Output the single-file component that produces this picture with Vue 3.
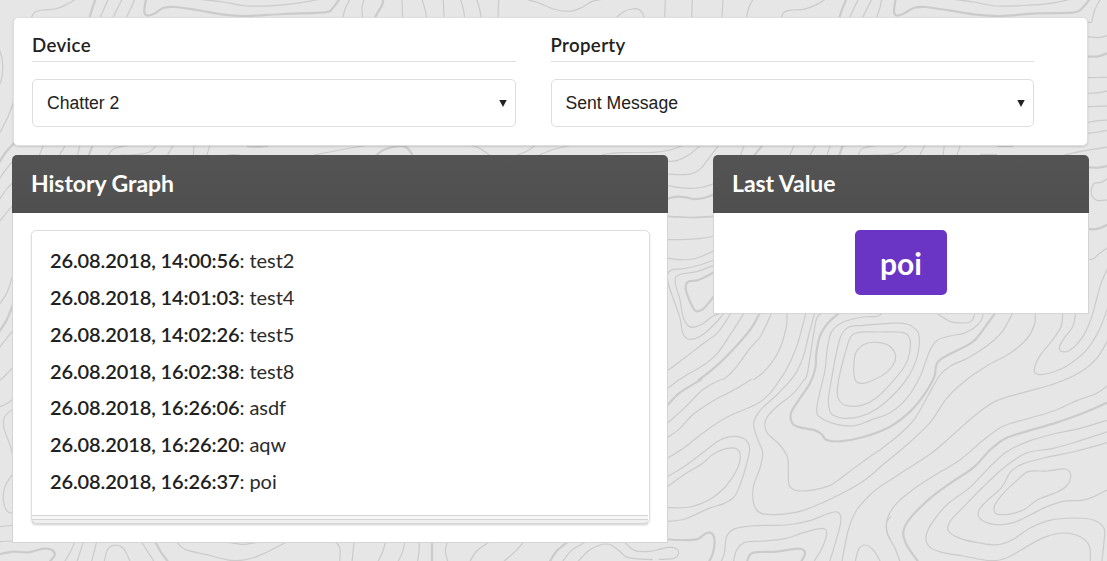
<script setup>
const fields = [
  { label: 'Device', value: 'Chatter 2' },
  { label: 'Property', value: 'Sent Message' }
]

const messages = [
  { time: '26.08.2018, 14:00:56', text: 'test2' },
  { time: '26.08.2018, 14:01:03', text: 'test4' },
  { time: '26.08.2018, 14:02:26', text: 'test5' },
  { time: '26.08.2018, 16:02:38', text: 'test8' },
  { time: '26.08.2018, 16:26:06', text: 'asdf' },
  { time: '26.08.2018, 16:26:20', text: 'aqw' },
  { time: '26.08.2018, 16:26:37', text: 'poi' }
]

// Contour lines of the backdrop, per patch, in thirds of a pixel.
// "thin" and "bold" hold flat x,y lists; a closed ring repeats its first point.
const patches = [
  {
    x: 0, y: 0,
    thin: [
      [92, 56, 105, 36, 130, 30, 165, 27, 195, 16, 226, -2],
      [300, 54, 312, 26, 325, -2],
      [338, 54, 352, 26, 366, -2],
      [378, 54, 393, 24, 404, -2],
      [602, -2, 670, 6, 740, 18, 830, 16, 900, 8, 960, -2],
      [1028, 54, 1036, 25, 1050, -2],
      [1088, 54, 1086, 25, 1092, -2],
      [-2, 148, 6, 175, 8, 205, 5, 235, -2, 256],
      [40, 308, 24, 350, -4, 405],
      [-4, 540, 18, 508, 40, 482],
      [-4, 602, 18, 570, 40, 546],
      [-4, 668, 18, 640, 42, 612],
      [118, 466, 130, 436], [178, 466, 196, 436], [232, 466, 240, 436],
      [324, 466, 342, 446, 385, 436],
      [360, 466, 415, 463, 450, 455, 468, 436],
      [502, 466, 520, 436], [580, 466, 582, 436], [620, 466, 630, 436],
      [720, 466, 700, 464, 680, 466],
      [942, 465, 1020, 450, 1112, 434]
    ],
    bold: [
      [268, 54, 276, 28, 286, -2],
      [438, -2, 434, 20, 434, 40, 445, 47, 465, 40, 490, 24, 525, 21, 590, 30, 670, 44, 740, 48, 850, 42, 975, 37, 998, 24, 1018, -2],
      [-4, 490, 18, 456, 42, 430],
      [266, 466, 278, 436],
      [740, 438, 770, 440, 805, 437]
    ]
  },
  {
    x: 370, y: 0,
    thin: [
      [98, 54, 96, -2], [170, 54, 165, 28, 156, -2], [222, 54, 220, -2],
      [284, 54, 280, 28, 272, -2], [333, 54, 329, 28, 320, -2], [384, 54, 386, -2],
      [470, -2, 510, 10, 550, 27, 595, 34, 630, 25, 665, 5, 696, -2],
      [738, 54, 760, 36, 785, 27, 806, 28, 817, 39, 822, 54],
      [884, 54, 886, -2], [965, 54, 967, -2], [1056, 54, 1059, -2],
      [275, 436, 318, 440, 360, 466],
      [440, 466, 470, 454, 496, 436],
      [506, 466, 545, 450, 600, 436],
      [695, 464, 750, 458, 850, 457, 900, 450, 940, 436],
      [892, 484, 920, 482, 955, 466, 990, 437],
      [892, 522, 930, 524, 965, 521, 992, 506, 1014, 478, 1045, 437],
      [892, 556, 930, 563, 965, 565, 1000, 561, 1032, 551],
      [892, 650, 970, 653, 1032, 650]
    ],
    bold: [
      [14, 54, 24, 36, 36, 16, 40, -2],
      [18, 466, 45, 448, 88, 438, 112, 444, 128, 466],
      [892, 596, 920, 590, 948, 592, 970, 597, 990, 596, 1012, 591, 1032, 583]
    ]
  },
  {
    x: 737, y: 0,
    thin: [
      [28, 54, 35, 24, 48, -2],
      [132, 54, 142, 36, 165, 30, 200, 28, 232, 17, 265, -2],
      [337, 54, 350, 26, 364, -2], [376, 54, 390, 26, 404, -2], [418, 54, 428, 26, 434, -2],
      [652, -2, 710, 6, 780, 18, 870, 16, 940, 10, 1000, -2],
      [10, 466, 22, 436], [158, 466, 172, 436], [218, 466, 236, 436], [270, 466, 280, 436],
      [364, 466, 375, 446, 418, 436],
      [395, 466, 450, 464, 485, 457, 510, 436],
      [548, 466, 564, 436], [618, 466, 622, 436], [660, 466, 670, 436],
      [982, 465, 1045, 452, 1114, 441],
      [1052, 66, 1063, 67, 1066, 58, 1074, 28, 1090, -2],
      [1052, 110, 1085, 113, 1114, 106],
      [1052, 233, 1114, 232], [1052, 280, 1085, 278, 1114, 272],
      [1052, 320, 1114, 318], [1052, 368, 1085, 362, 1114, 360], [1052, 400, 1085, 396, 1114, 391],
      [1114, 533, 1095, 546, 1072, 550, 1063, 568, 1065, 588, 1080, 601, 1114, 600]
    ],
    bold: [
      [307, 54, 316, 26, 328, -2],
      [476, -2, 472, 20, 472, 40, 482, 47, 502, 40, 530, 24, 565, 21, 640, 32, 720, 44, 790, 48, 900, 40, 1005, 38, 1032, 28, 1058, -2],
      [1052, 170, 1085, 169, 1114, 158],
      [1052, 502, 1085, 503, 1114, 497],
      [52, 466, 76, 436], [307, 466, 317, 436], [730, 465, 780, 465],
      [780, 438, 830, 438]
    ]
  },
  {
    x: 1047, y: 200,
    thin: [
      [124, 178, 140, 176, 155, 162, 184, 141],
      [149, 298, 163, 248, 184, 200]
    ],
    bold: [[124, 86, 140, 88, 160, 84, 184, 73]]
  },
  {
    x: 660, y: 210, clipHeight: 510,
    thin: [
      [22, 18, 90, 22, 162, 18],
      [22, 89, 80, 88, 125, 85, 162, 78],
      [22, 144, 60, 149, 100, 147, 130, 137, 162, 122],
      [162, 150, 120, 165, 70, 176, 38, 179, 23, 192, 26, 225, 45, 280, 60, 325, 68, 368, 82, 386, 105, 386, 135, 369, 175, 330, 200, 298],
      [162, 166, 110, 185, 65, 192, 47, 202, 47, 225, 60, 270, 68, 315, 82, 345, 100, 352, 125, 343, 160, 318, 187, 308],
      [22, 482, 75, 443, 125, 404, 170, 371, 195, 338, 213, 308],
      [22, 536, 75, 498, 130, 466, 172, 430, 210, 375, 253, 308],
      [132, 544, 165, 518, 195, 505, 230, 470, 270, 415, 302, 378, 335, 308],
      [222, 542, 290, 503, 330, 465, 360, 415, 379, 350, 381, 308],
      [333, 544, 375, 486, 410, 410, 438, 308],
      [363, 544, 405, 493, 430, 440, 445, 380, 464, 308],
      [408, 544, 438, 503, 448, 455, 458, 390, 470, 325, 488, 308]
    ],
    bold: [
      [162, 187, 115, 210, 85, 215, 77, 235, 90, 275, 106, 302, 125, 300, 145, 280, 162, 258],
      [72, 542, 130, 500, 178, 460, 220, 418, 270, 360, 300, 308]
    ]
  },
  {
    x: 720, y: 300,
    thin: [
      [404, 235, 401, 195, 409, 155, 435, 132, 470, 127, 505, 136, 525, 160, 524, 185, 500, 217, 460, 240, 430, 250, 412, 247, 404, 235],
      [357, 300, 352, 270, 360, 220, 374, 165, 390, 115, 415, 97, 475, 96, 545, 97, 568, 113, 570, 150, 556, 195, 515, 248, 470, 293, 425, 316, 380, 317, 357, 300],
      [330, 335, 325, 300, 334, 240, 348, 165, 362, 110, 385, 82, 430, 76, 510, 70, 560, 72, 593, 95, 598, 130, 590, 175, 565, 230, 520, 285, 470, 327, 420, 350, 370, 355, 340, 346, 330, 335],
      [488, 40, 470, 49, 430, 51, 370, 66, 335, 95, 322, 145, 315, 210, 300, 275, 290, 328, 300, 352, 350, 373, 405, 377, 450, 361, 510, 338, 560, 295, 600, 230, 628, 155, 650, 122, 690, 108, 730, 100, 762, 84, 784, 60, 790, 40],
      [650, 40, 690, 64, 725, 69, 750, 66, 760, 54, 764, 40]
    ],
    bold: [
      [356, 40, 325, 68, 300, 108, 289, 160, 286, 205, 270, 250, 235, 302, 213, 340, 217, 370, 240, 382, 285, 391, 304, 402, 320, 420, 360, 424, 430, 411, 510, 380, 570, 335, 615, 280, 643, 230, 650, 192, 675, 170, 755, 128, 790, 88, 825, 40]
    ]
  },
  {
    x: 880, y: 300,
    thin: [
      [-3, 452, 60, 402, 105, 355, 145, 285, 180, 225, 212, 198, 265, 173, 320, 138, 365, 97, 398, 40],
      [-3, 504, 80, 435, 150, 368, 200, 295, 255, 243, 320, 198, 390, 160, 440, 117, 463, 75, 466, 40],
      [-3, 562, 80, 508, 160, 455, 230, 394, 290, 342, 350, 302, 440, 275, 530, 249, 600, 217, 650, 175, 684, 120],
      [62, 790, 45, 745, 22, 700, 22, 655, 50, 610, 100, 568, 160, 528, 240, 480, 310, 420, 370, 378, 440, 357, 520, 333, 590, 302, 650, 280, 684, 256],
      [548, 40, 543, 80, 515, 123, 478, 170, 463, 209, 474, 223, 510, 219, 560, 198, 615, 155, 655, 95, 684, 22],
      [587, 40, 578, 80, 550, 118, 538, 143, 548, 155, 570, 151, 605, 115, 632, 60, 650, -4],
      [684, 360, 600, 385, 520, 402, 445, 424, 380, 455, 325, 505, 270, 562, 200, 615, 155, 670, 138, 710, 148, 740, 185, 757, 250, 768, 330, 782, 380, 774, 430, 746, 490, 713, 550, 699, 600, 710, 628, 738, 631, 790],
      [684, 395, 600, 422, 520, 445, 440, 459, 375, 500, 315, 555, 255, 616, 210, 665, 205, 693, 240, 715, 300, 729, 355, 734, 400, 718, 450, 684, 510, 661, 580, 654, 640, 660, 672, 685, 672, 725, 665, 790],
      [684, 427, 590, 453, 500, 472, 425, 493, 390, 518, 365, 562, 315, 608, 295, 636, 305, 660, 350, 674, 400, 668, 450, 645, 500, 620, 550, 604, 620, 598, 684, 568],
      [345, 638, 343, 618, 370, 580, 410, 542, 445, 515, 500, 513, 555, 507, 572, 525, 562, 555, 530, 577, 475, 598, 430, 630, 385, 643, 355, 643, 345, 638]
    ],
    bold: [
      [118, 790, 80, 735, 70, 695, 90, 655, 150, 595, 210, 550, 280, 503, 330, 450, 375, 416, 440, 394, 520, 371, 600, 343, 684, 307]
    ]
  },
  {
    x: 660, y: 380,
    thin: [
      [22, 26, 58, -2],
      [22, 130, 75, 82, 130, 28, 184, -2],
      [22, 173, 60, 145, 100, 103, 160, 62, 220, 31, 275, -2],
      [22, 235, 70, 205, 130, 158, 200, 112, 290, 72, 330, 40, 360, -2],
      [22, 290, 75, 258, 130, 217, 180, 180, 225, 169, 257, 180, 269, 206, 259, 255, 242, 310, 223, 350, 193, 370, 145, 386, 75, 417, 22, 424],
      [22, 320, 75, 282, 125, 252, 160, 222, 198, 206, 231, 207, 241, 232, 230, 270, 198, 318, 150, 358, 90, 381, 22, 383],
      [395, -2, 350, 45, 300, 92, 281, 132, 292, 175, 308, 220, 298, 270, 280, 320, 282, 374, 304, 400, 360, 403, 430, 391, 510, 358, 600, 310, 658, 264],
      [433, -2, 400, 40, 345, 85, 317, 120, 321, 158, 357, 192, 382, 230, 385, 275, 387, 315, 407, 331, 450, 331, 510, 316, 560, 281, 625, 233, 658, 211],
      [545, 548, 565, 450, 590, 390, 635, 340, 658, 322],
      [182, 548, 193, 520, 200, 470, 225, 446, 290, 437, 380, 435, 450, 422, 500, 402, 532, 396, 543, 420, 530, 475, 508, 548],
      [220, 548, 230, 510, 255, 487, 310, 483, 375, 476, 430, 458, 485, 445, 500, 458, 488, 500, 460, 548],
      [585, 548, 596, 508, 615, 495, 640, 510, 663, 548],
      [692, 410, 680, 428, 681, 457, 692, 478],
      [-4, 509, 25, 502, 50, 506, 55, 522, 38, 536, -4, 538]
    ],
    bold: [
      [22, 76, 60, 38, 125, -2],
      [22, 478, 60, 480, 110, 478, 135, 462, 152, 458, 163, 475, 160, 515, 146, 548],
      [260, 548, 272, 522, 300, 516, 350, 515, 415, 506, 435, 518, 422, 548]
    ]
  },
  {
    x: 0, y: 220,
    thin: [
      [-3, 254, 20, 220, 40, 160], [-3, 384, 20, 355, 40, 330],
      [-3, 484, 20, 462, 40, 440], [-3, 561, 20, 551, 40, 536],
      [40, 566, 14, 590, 12, 625, 30, 675, 39, 710],
      [39, 760, 15, 800, 10, 840, 20, 872, 40, 882],
      [-3, 920, 40, 916], [-3, 965, 40, 963, 65, 966],
      [192, 1028, 214, 990, 224, 966], [230, 1028, 250, 966], [274, 1028, 290, 966],
      [312, 1028, 322, 990, 342, 976, 370, 985, 392, 1028],
      [464, 1028, 440, 990, 424, 966],
      [530, 966, 555, 988, 620, 1004, 700, 1022, 770, 1010, 860, 966],
      [680, 966, 730, 973, 775, 966]
    ],
    bold: [
      [-3, 336, 20, 300, 40, 250],
      [-3, 1003, 40, 995, 85, 997, 130, 986, 156, 990, 164, 1006, 146, 1028],
      [506, 1028, 482, 995, 466, 966]
    ]
  },
  {
    x: 300, y: 535,
    thin: [
      [108, 22, 120, 40, 119, 82], [162, 22, 156, 82], [256, 22, 248, 50, 233, 82],
      [314, 22, 308, 50, 293, 82], [358, 22, 357, 50, 352, 82], [442, 22, 436, 48, 444, 82],
      [566, 22, 530, 48, 508, 82], [670, 22, 645, 50, 608, 82],
      [856, 22, 815, 46, 786, 82],
      [832, 82, 870, 44, 920, 27, 955, 45, 985, 68, 1058, 74],
      [974, 22, 1005, 47, 1050, 49, 1078, 43]
    ],
    bold: [[396, 22, 396, 82], [802, 22, 770, 48, 748, 82]]
  }
]

// Catmull-Rom spline through the points, written as cubic segments.
function curve(flat) {
  const p = []
  for (let i = 0; i < flat.length; i += 2) p.push([flat[i], flat[i + 1]])
  const n = p.length
  const closed = n > 3 && p[0][0] === p[n - 1][0] && p[0][1] === p[n - 1][1]
  const at = i => {
    if (closed) return p[(i + n - 1) % (n - 1)]
    return p[Math.max(0, Math.min(n - 1, i))]
  }
  let d = `M${p[0]}`
  for (let i = 0; i < n - 1; i++) {
    const [a, b, c, e] = [at(i - 1), p[i], p[i + 1], at(i + 2)]
    d += `C${b[0] + (c[0] - a[0]) / 6},${b[1] + (c[1] - a[1]) / 6} ${c[0] - (e[0] - b[0]) / 6},${c[1] - (e[1] - b[1]) / 6} ${c}`
  }
  return d
}
</script>

<template>
  <div class="page">
    <svg class="contours" viewBox="0 0 1107 561" aria-hidden="true">
      <defs>
        <clipPath v-for="(patch, i) in patches" :id="'patch-' + i" :key="i">
          <rect x="-10" y="-10" width="1200" :height="(patch.clipHeight || 1200) + 10" />
        </clipPath>
      </defs>
      <g
        v-for="(patch, i) in patches"
        :key="i"
        :transform="`translate(${patch.x} ${patch.y}) scale(0.33333)`"
        :clip-path="`url(#patch-${i})`"
      >
        <path v-for="(line, j) in patch.thin" :key="'t' + j" class="thin" :d="curve(line)" />
        <path v-for="(line, j) in patch.bold" :key="'b' + j" class="bold" :d="curve(line)" />
      </g>
    </svg>

    <main class="content">
      <section class="filters">
        <div v-for="field in fields" :key="field.label" class="field">
          <h4 class="field-label">{{ field.label }}</h4>
          <div class="select">
            <span>{{ field.value }}</span>
            <svg class="caret" width="8" height="7" viewBox="0 0 8 7"><path d="M0.3 0H7.7L4 7Z" /></svg>
          </div>
        </div>
      </section>

      <div class="columns">
        <section class="panel history">
          <h3 class="panel-title">History Graph</h3>
          <div class="panel-body">
            <div class="stack">
              <div v-for="m in messages" :key="m.time" class="message"><b>{{ m.time }}</b>: {{ m.text }}</div>
            </div>
          </div>
        </section>

        <section class="panel last">
          <h3 class="panel-title">Last Value</h3>
          <div class="panel-body">
            <div class="value">poi</div>
          </div>
        </section>
      </div>
    </main>
  </div>
</template>

<style>
body {
  margin: 0;
  overflow: hidden;
}
</style>

<style scoped>
.page {
  position: relative;
  box-sizing: border-box;
  width: 1107px;
  height: 561px;
  overflow: hidden;
  background: #e6e6e6;
  color: #212121;
  font-family: Lato, "Liberation Sans", sans-serif;
}
.page * {
  box-sizing: border-box;
}
.contours {
  position: absolute;
  inset: 0;
  width: 1107px;
  height: 561px;
}
.contours path {
  fill: none;
  stroke: #cbcbcb;
}
.contours .thin {
  stroke-width: 3.6;
}
.contours .bold {
  stroke-width: 6.6;
}
.content {
  position: relative;
  padding: 17px 18px 0 12px;
}
.filters {
  display: flex;
  gap: 35px;
  height: 129px;
  margin: 0 1px;
  padding: 15px 53px 0 18px;
  background: #fff;
  border: 1px solid #dedede;
  border-radius: 5px;
  box-shadow: 0 1px 2px rgba(34, 36, 38, 0.15);
}
.field {
  flex: 1;
}
.field-label {
  height: 29px;
  margin: 0 0 17px;
  border-bottom: 1px solid #dedede;
  font-size: 18.67px;
  font-weight: 600;
  letter-spacing: 0.35px;
  line-height: 24px;
}
.select {
  display: flex;
  align-items: center;
  justify-content: space-between;
  height: 48px;
  padding: 0 8px 0 14px;
  border: 1px solid #dedede;
  border-radius: 5px;
  font-family: "Liberation Sans", Arial, sans-serif;
  font-size: 17.6px;
}
.caret {
  fill: #212121;
}
.columns {
  display: flex;
  align-items: flex-start;
  justify-content: space-between;
  margin-top: 9px;
}
.history {
  width: 656px;
}
.last {
  width: 376px;
}
.panel-title {
  height: 58px;
  margin: 0;
  padding-left: 19px;
  border-radius: 5px 5px 0 0;
  background: linear-gradient(#545454, #4f4f4f);
  color: #fff;
  font-size: 23px;
  font-weight: 700;
  letter-spacing: -0.04px;
  line-height: 56px;
}
.panel-body {
  padding: 17px 17px 18px 18px;
  background: #fff;
  border: 1px solid #d4d4d5;
  border-top: 0;
}
.stack {
  position: relative;
  height: 294px;
  padding: 11.2px 18px 0;
  border: 1px solid #dedede;
  border-radius: 5px;
  box-shadow: 0 1px 2px rgba(34, 36, 38, 0.15);
}
.stack::before,
.stack::after {
  content: "";
  position: absolute;
  box-sizing: border-box;
  left: 0;
  width: 616px;
  border-top: 1px solid #d4d4d5;
  background: rgba(0, 0, 0, 0.03);
}
.stack::before {
  bottom: 0;
  height: 8px;
}
.stack::after {
  bottom: -3px;
  height: 7px;
}
.message {
  height: 36.8px;
  color: #2b2b2b;
  font-size: 20px;
  font-weight: 400;
  letter-spacing: -0.05px;
  line-height: 36.8px;
}
.message b {
  color: #212121;
  font-weight: 600;
  letter-spacing: -0.11px;
}
.value {
  width: 92px;
  height: 65px;
  margin: 0 0 0 123px;
  border-radius: 5px;
  background: #6a35c5;
  color: #fff;
  font-size: 30px;
  font-weight: 700;
  line-height: 66px;
  text-align: center;
}
</style>
